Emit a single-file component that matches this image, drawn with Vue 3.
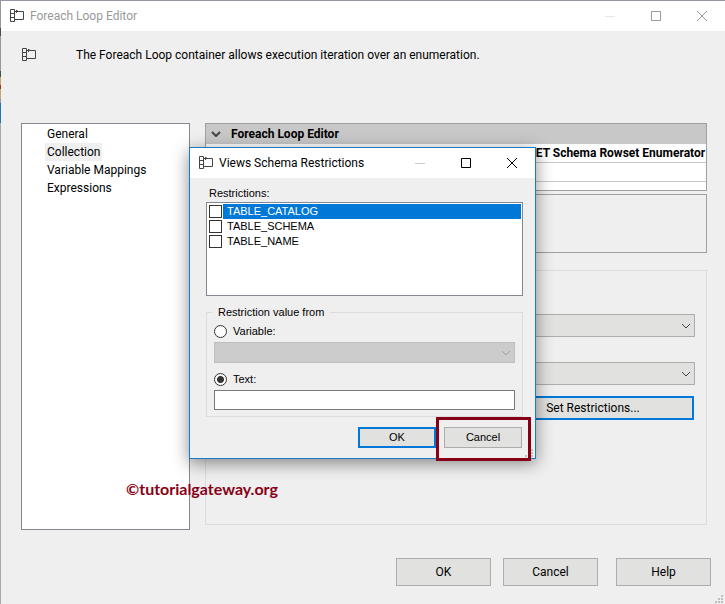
<script setup>
import { ref, h } from 'vue'

const pages = ['General', 'Collection', 'Variable Mappings', 'Expressions']
const activePage = ref('Collection')
const restrictions = ref([
  { name: 'TABLE_CATALOG', checked: false },
  { name: 'TABLE_SCHEMA', checked: false },
  { name: 'TABLE_NAME', checked: false },
])
const selected = ref('TABLE_CATALOG')
const source = ref('text')
const text = ref('')

const svg = (cls, w, hgt, d) => () =>
  h('svg', { class: cls, width: w, height: hgt, viewBox: `0 0 ${w} ${hgt}`, 'aria-hidden': 'true', fill: 'none', stroke: 'currentColor' }, [h('path', { d })])

const LoopIcon = svg('icon', 15, 14, 'M.5 .5H4.5V12.5H.5ZM.5 4.5H4.5M.5 8.5H4.5M4.5 2.5H13.5V10.5H4.5M6.5 1V4M6.5 1.5H7.5')
const MinIcon = svg('icon', 10, 10, 'M0 5.5H10')
const MaxIcon = svg('icon', 10, 10, 'M.5 .5H9.5V9.5H.5Z')
const CloseIcon = svg('icon', 10, 10, 'M0 0L10 10M10 0L0 10')
const Chevron = svg('chevron', 10, 6, 'M1 1L5 5L9 1')
const Grip = () =>
  h('svg', { class: 'grip', width: 8, height: 8, viewBox: '0 0 8 8', 'aria-hidden': 'true' }, [
    h('path', { fill: '#bfbfbf', d: 'M6 0h2v2H6zM3 3h2v2H3zM6 3h2v2H6zM0 6h2v2H0zM3 6h2v2H3zM6 6h2v2H6z' }),
  ])
</script>

<template>
  <div class="window">
    <div class="edge"></div>
    <header class="titlebar inactive">
      <LoopIcon />
      <h1 class="title">Foreach Loop Editor</h1>
      <button class="cap min" aria-label="Minimize" disabled><MinIcon /></button>
      <button class="cap" aria-label="Maximize"><MaxIcon /></button>
      <button class="cap" aria-label="Close"><CloseIcon /></button>
    </header>

    <div class="intro">
      <LoopIcon />
      <p>The Foreach Loop container allows execution iteration over an enumeration.</p>
    </div>

    <main class="body">
      <nav class="pages">
        <button
          v-for="page in pages"
          :key="page"
          class="page"
          :class="{ active: page === activePage }"
          @click="activePage = page"
        >{{ page }}</button>
      </nav>

      <section class="settings">
        <div class="grid">
          <div class="grid-head"><Chevron /><strong>Foreach Loop Editor</strong></div>
          <div class="grid-row"><span class="value">Foreach ADO.NET Schema Rowset Enumerator</span></div>
          <div class="grid-row"></div>
          <div class="grid-rest"></div>
        </div>
        <div class="hint"></div>
        <div class="config">
          <div class="combo"><select aria-label="Connection"></select><Chevron /></div>
          <div class="combo"><select aria-label="Schema"></select><Chevron /></div>
          <button class="btn default restrict">Set Restrictions...</button>
        </div>
      </section>
    </main>

    <footer class="actions">
      <button class="btn">OK</button>
      <button class="btn">Cancel</button>
      <button class="btn help">Help</button>
    </footer>
    <Grip />

    <div class="dialog" role="dialog" aria-labelledby="dlg-title">
      <header class="titlebar">
        <LoopIcon />
        <h2 id="dlg-title" class="title">Views Schema Restrictions</h2>
        <button class="cap min" aria-label="Minimize" disabled><MinIcon /></button>
        <button class="cap" aria-label="Maximize"><MaxIcon /></button>
        <button class="cap" aria-label="Close"><CloseIcon /></button>
      </header>
      <div class="dialog-body">
        <p class="list-label">Restrictions:</p>
        <div class="list">
          <label v-for="r in restrictions" :key="r.name" class="item" @click="selected = r.name">
            <input v-model="r.checked" type="checkbox" />
            <span :class="{ selected: r.name === selected }">{{ r.name }}</span>
          </label>
        </div>
        <fieldset class="group">
          <legend>Restriction value from</legend>
          <label class="radio"><input v-model="source" type="radio" value="variable" />Variable:</label>
          <div class="combo disabled"><select aria-label="Variable" disabled></select><Chevron /></div>
          <label class="radio"><input v-model="source" type="radio" value="text" />Text:</label>
          <input v-model="text" class="field" type="text" aria-label="Text" />
        </fieldset>
        <div class="dialog-actions">
          <button class="btn default">OK</button>
          <button class="btn">Cancel</button>
        </div>
      </div>
      <Grip />
      <div class="highlight"></div>
    </div>

    <div class="credit">©tutorialgateway.org</div>
  </div>
</template>

<style>
body {
  margin: 0;
}
</style>

<style scoped>
* {
  box-sizing: border-box;
}
.window {
  position: relative;
  display: flex;
  flex-direction: column;
  min-height: 100vh;
  padding-left: 1px;
  border-top: 1px solid #9695a3;
  background: #efefef;
  color: #000;
  font: 12px/18px Roboto, 'Noto Sans', sans-serif;
}
.edge {
  position: absolute;
  top: 0;
  bottom: 0;
  left: 0;
  width: 1px;
  background: linear-gradient(#9695a3 0 27px, #4b4b55 27px 35px, #9695a3 35px 70px, #4b4b55 70px 76px, #c8a868 76px 84px, #a03030 84px 88px, #c8a868 88px 98px, #9695a3 98px 102px, #1878b8 102px 122px, #a8a8a8 122px);
}
p,
h1,
h2 {
  margin: 0;
  font-size: inherit;
  font-weight: 400;
}
button,
input,
select {
  margin: 0;
  font: inherit;
  color: inherit;
}
.titlebar {
  display: flex;
  align-items: center;
  height: 30px;
  padding-left: 9px;
  background: #fff;
}
.titlebar.inactive {
  color: #999;
}
.icon {
  display: block;
  flex: none;
}
.titlebar > .icon,
.intro > .icon {
  color: #444;
}
.title {
  flex: 1;
  margin-left: 5px;
  white-space: nowrap;
}
.cap {
  display: flex;
  align-items: center;
  justify-content: center;
  width: 46px;
  height: 30px;
  padding: 0;
  border: 0;
  background: none;
}
.cap.min {
  color: #ccc;
}
.inactive .cap.min {
  color: #e4eae8;
}
.intro {
  display: flex;
  align-items: center;
  gap: 39px;
  height: 48px;
  padding: 0 21px;
}
.body {
  display: flex;
  flex: 1;
  gap: 15px;
  margin-top: 44px;
  padding: 0 18px 0 20px;
}
.pages {
  flex: none;
  display: flex;
  flex-direction: column;
  align-items: flex-start;
  width: 169px;
  padding: 1px 23px;
  border: 1px solid #828790;
  background: #fff;
}
.page {
  height: 18px;
  padding: 0 2px;
  border: 0;
  background: none;
  white-space: nowrap;
}
.page.active {
  background: #efefef;
}
.settings {
  flex: 1;
  display: flex;
  flex-direction: column;
  min-width: 0;
  padding-bottom: 5px;
}
.grid {
  height: 68px;
  border: 1px solid #a0a0a0;
  background: #fff;
  overflow: hidden;
}
.grid-head {
  display: flex;
  align-items: center;
  gap: 10px;
  height: 20px;
  padding-left: 5px;
  background: #c8c8c8;
}
.grid-head .chevron {
  stroke-width: 2;
}
.grid-row {
  height: 19px;
  padding-left: 248px;
  border-bottom: 1px solid #c8c8c8;
  font-weight: 700;
  white-space: nowrap;
}
.hint {
  height: 59px;
  margin-top: 3px;
  border: 1px solid #a0a0a0;
}
.config {
  flex: 1;
  display: flex;
  flex-direction: column;
  margin: 17px 0 0;
  padding: 43px 11px 0;
  border: 1px solid #dcdcdc;
}
.combo {
  display: flex;
  align-items: center;
  height: 23px;
  margin-bottom: 25px;
}
.combo select {
  flex: 1;
  align-self: stretch;
  min-width: 0;
  appearance: none;
  border: 1px solid #adadad;
  border-radius: 0;
  background: #e1e1df;
}
.combo .chevron {
  margin-left: -14px;
  margin-right: 4px;
  pointer-events: none;
}
.chevron {
  color: #444;
  flex: none;
}
.btn {
  height: 28px;
  padding: 0;
  border: 1px solid #adadad;
  background: #e1e1df;
  text-align: center;
}
.btn.default {
  border: 2px solid #0078d7;
}
.restrict {
  align-self: flex-end;
  width: 202px;
  height: 24px;
  margin-top: -14px;
  margin-right: 1px;
}
.actions {
  display: flex;
  justify-content: flex-end;
  gap: 12px;
  padding: 28px 14px 18px;
}
.actions .btn {
  width: 95px;
}
.actions .help {
  margin-left: 6px;
}
.grip {
  position: absolute;
  right: 2px;
  bottom: 1px;
}
.dialog {
  position: absolute;
  top: 146px;
  left: 189px;
  width: 347px;
  border: 1px solid #1979ca;
  background: #efefef;
  box-shadow: 0 4px 16px rgba(0, 0, 0, 0.45);
}
.dialog-body {
  padding: 6px 12px 10px 16px;
  font: 11px/15px 'Liberation Sans', Arial, sans-serif;
}
.list-label {
  padding: 2px 3px 1px;
}
.list {
  height: 94px;
  padding: 1px;
  border: 1px solid #828790;
  background: #fff;
}
.item {
  display: flex;
  align-items: center;
  height: 15px;
  padding-left: 1px;
}
.item input {
  appearance: none;
  width: 13px;
  height: 13px;
  border: 1px solid #333;
  background: #fff;
}
.item input:checked {
  background: #0078d7;
}
.item span {
  flex: 1;
  margin-left: 1px;
  padding-left: 4px;
}
.item .selected {
  background: #0078d7;
  color: #fff;
}
.group {
  min-width: 0;
  margin: 9px 0 0;
  padding: 4px 7px 6px;
  border: 1px solid #dcdcdc;
}
legend {
  margin-left: -2px;
  padding: 0 6px;
}
.radio {
  display: flex;
  align-items: center;
  gap: 6px;
  height: 15px;
}
.radio input {
  appearance: none;
  width: 13px;
  height: 13px;
  border: 1px solid #333;
  border-radius: 50%;
  background: #fff;
}
.radio input:checked {
  background: radial-gradient(circle, #333 0 3px, #fff 4px);
}
.group .combo {
  height: 21px;
  margin: 3px 0 9px;
}
.combo.disabled select {
  border-color: #bfbfbf;
  background: #ccc;
  opacity: 1;
}
.combo.disabled .chevron {
  color: #a3a3a3;
}
.field {
  display: block;
  width: 100%;
  height: 20px;
  margin-top: 3px;
  padding: 0 3px;
  border: 1px solid #7a7a7a;
  border-radius: 0;
  background: #fff;
}
.dialog-actions {
  display: flex;
  justify-content: flex-end;
  gap: 8px;
  margin-top: 10px;
  padding-right: 1px;
}
.dialog-actions .btn {
  width: 78px;
  height: 21px;
}
.highlight {
  position: absolute;
  right: 4px;
  bottom: -3px;
  width: 95px;
  height: 44px;
  border: 3px solid #880015;
  pointer-events: none;
}
.credit {
  position: absolute;
  top: 478px;
  left: 126px;
  color: #880015;
  font: 700 16px/20px Lato, sans-serif;
}
</style>
